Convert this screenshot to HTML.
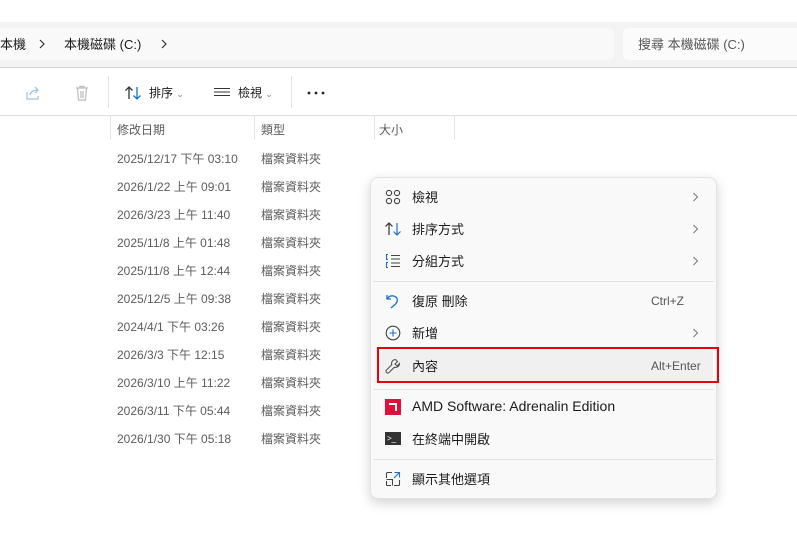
<!DOCTYPE html>
<html><head><meta charset="utf-8"><style>
*{margin:0;padding:0;box-sizing:border-box}
body{width:797px;height:534px;overflow:hidden;background:#fff;position:relative;font-family:"Liberation Sans","Noto Sans CJK TC",sans-serif;color:#1a1a1a}
.a{position:absolute}
.band{left:0;top:22px;width:797px;height:46px;background:#f3f3f3;border-bottom:1px solid #d5d5d5}
.addr{left:0;top:28px;width:614px;height:32px;background:#f9f9f9;border-radius:0 5px 5px 0}
.search{left:623px;top:28px;width:180px;height:32px;background:#fbfbfb;border-radius:5px;font-size:13px;color:#555;padding:6px 0 0 15px}
.t13{font-size:13px}
.hdr{font-size:12px;color:#5a5a5a}
.row{font-size:12px;color:#5c5c5c}
.sep{background:#e5e5e5;width:1px}
.menu{left:370px;top:177px;width:347px;height:322px;background:#f9f9f9;border-radius:8px;box-shadow:0 4px 12px rgba(0,0,0,.18);border:1px solid #e3e3e3}
.mi{font-size:13px;color:#1b1b1b}
.ms{left:373px;width:341px;height:1px;background:#e3e3e3}
.sc{font-size:12px;color:#555}
</style></head><body>
<div class="a band"></div>
<div class="a addr"></div>
<div class="a t13" style="left:0;top:34px">本機</div>
<svg class="a" style="left:38px;top:39px" width="8" height="10" viewBox="0 0 8 10" fill="none" stroke="#333" stroke-width="1.2"><path d="M2 1l4 4-4 4"/></svg>
<div class="a t13" style="left:64px;top:34px">本機磁碟 (C:)</div>
<svg class="a" style="left:160px;top:39px" width="8" height="10" viewBox="0 0 8 10" fill="none" stroke="#333" stroke-width="1.2"><path d="M2 1l4 4-4 4"/></svg>
<div class="a search">搜尋 本機磁碟 (C:)</div>

<svg class="a" style="left:24px;top:84px" width="18" height="18" viewBox="0 0 18 18" fill="none" stroke="#9ec3e6" stroke-width="1.2"><path d="M3 8v7h11v-3"/><path d="M6 11c1-4 4-5 8-5M11 3l3 3-3 3"/></svg>
<svg class="a" style="left:73px;top:84px" width="18" height="18" viewBox="0 0 18 18" fill="none" stroke="#bbb" stroke-width="1.2"><path d="M3 4h12M7 4V2.5h4V4M4.5 4l1 12h7l1-12M8 7v7M10 7v7"/></svg>
<div class="a sep" style="left:108px;top:76px;height:32px"></div>
<svg class="a" style="left:124px;top:85px" width="18" height="16" viewBox="0 0 18 16" fill="none" stroke-width="1.3"><path d="M5 14V2M1.5 5.5L5 2l3.5 3.5" stroke="#333"/><path d="M13 2v12M9.5 10.5L13 14l3.5-3.5" stroke="#1a73c9"/></svg>
<div class="a t13" style="left:149px;top:84px;font-size:12px">排序 <span style="font-size:9px;color:#888">⌄</span></div>
<svg class="a" style="left:213px;top:87px" width="18" height="12" viewBox="0 0 18 12" stroke="#333" stroke-width="1.1"><path d="M1 1.5h16M1 5h16M1 8.5h16"/></svg>
<div class="a" style="left:238px;top:84px;font-size:12px">檢視 <span style="font-size:9px;color:#888">⌄</span></div>
<div class="a sep" style="left:291px;top:76px;height:32px"></div>
<svg class="a" style="left:307px;top:91px" width="18" height="4" viewBox="0 0 18 4" fill="#222"><circle cx="2" cy="2" r="1.4"/><circle cx="9" cy="2" r="1.4"/><circle cx="16" cy="2" r="1.4"/></svg>
<div class="a" style="left:0;top:115px;width:797px;height:1px;background:#ddd"></div>
<div class="a sep" style="left:110px;top:116px;height:24px"></div>
<div class="a sep" style="left:254px;top:116px;height:24px"></div>
<div class="a sep" style="left:374px;top:116px;height:24px"></div>
<div class="a sep" style="left:454px;top:116px;height:24px"></div>
<div class="a hdr" style="left:117px;top:121px">修改日期</div>
<div class="a hdr" style="left:261px;top:121px">類型</div>
<div class="a hdr" style="left:379px;top:121px">大小</div>

<div class="a row" style="left:117px;top:145px;line-height:28px">2025/12/17 下午 03:10<br>2026/1/22 上午 09:01<br>2026/3/23 上午 11:40<br>2025/11/8 上午 01:48<br>2025/11/8 上午 12:44<br>2025/12/5 上午 09:38<br>2024/4/1 下午 03:26<br>2026/3/3 下午 12:15<br>2026/3/10 上午 11:22<br>2026/3/11 下午 05:44<br>2026/1/30 下午 05:18</div>
<div class="a row" style="left:261px;top:145px;line-height:28px">檔案資料夾<br>檔案資料夾<br>檔案資料夾<br>檔案資料夾<br>檔案資料夾<br>檔案資料夾<br>檔案資料夾<br>檔案資料夾<br>檔案資料夾<br>檔案資料夾<br>檔案資料夾</div>

<div class="a menu"></div>
<svg class="a" style="left:385px;top:189px" width="16" height="16" viewBox="0 0 16 16" fill="none" stroke="#444" stroke-width="1.1"><circle cx="4" cy="4" r="2.6"/><circle cx="12" cy="4" r="2.6"/><circle cx="4" cy="12" r="2.6"/><circle cx="12" cy="12" r="2.6"/></svg>
<svg class="a" style="left:384px;top:221px" width="18" height="16" viewBox="0 0 18 16" fill="none" stroke-width="1.2"><path d="M5 14V2M1.5 5.5L5 2l3.5 3.5" stroke="#333"/><path d="M13 2v12M9.5 10.5L13 14l3.5-3.5" stroke="#1a73c9"/></svg>
<svg class="a" style="left:385px;top:253px" width="16" height="16" viewBox="0 0 16 16" fill="none" stroke-width="1.1"><path d="M3 1.5H1.5v5H3M3 9.5H1.5v5H3" stroke="#1a73c9"/><path d="M6 2.5h9M6 6h9M6 10h9M6 13.5h9" stroke="#444"/></svg>
<svg class="a" style="left:385px;top:293px" width="16" height="16" viewBox="0 0 16 16" fill="none" stroke="#1a73c9" stroke-width="1.3"><path d="M2 2v4h4"/><path d="M2.5 5.5C4 3 7 2 10 3.5c3 1.5 3 5 .5 7.5L6 15"/></svg>
<svg class="a" style="left:385px;top:325px" width="16" height="16" viewBox="0 0 16 16" fill="none" stroke-width="1.1"><circle cx="8" cy="8" r="6.8" stroke="#444"/><path d="M8 4.5v7M4.5 8h7" stroke="#1a73c9"/></svg>
<div class="a" style="left:380px;top:351px;width:333px;height:30px;background:#f0f0f0;border-radius:4px"></div>
<div class="a" style="left:377px;top:347px;width:342px;height:36px;border:2px solid #e8000b"></div>
<svg class="a" style="left:385px;top:358px" width="16" height="16" viewBox="0 0 16 16" fill="none" stroke="#555" stroke-width="1.1"><path d="M10.5 1.5a4 4 0 0 0-3.8 5.2L1.5 12a1.4 1.4 0 0 0 2.5 2.5l5.3-5.2A4 4 0 0 0 14.5 5.5l-2.5 2.5-2-2 2.5-2.5z"/></svg>
<div class="a" style="left:385px;top:399px;width:16px;height:16px;background:#e1103a"></div>
<div class="a" style="left:389px;top:403px;width:8px;height:8px;border-top:2px solid #fff;border-right:2px solid #fff"></div>
<div class="a" style="left:385px;top:432px;width:16px;height:13px;background:#333"></div>
<div class="a" style="left:387px;top:435px;font-size:8px;color:#fff;line-height:8px">&gt;_</div>
<svg class="a" style="left:385px;top:471px" width="16" height="16" viewBox="0 0 16 16" fill="none" stroke-width="1.1"><path d="M7 1.5H2.5a1 1 0 0 0-1 1V7M1.5 10v3.5a1 1 0 0 0 1 1H6M9 14.5h4.5a1 1 0 0 0 1-1V9M1.5 8.5h6v6" stroke="#444"/><path d="M9.5 1.5h5v5M14.5 1.5L9 7" stroke="#1a73c9"/></svg>

<div class="a mi" style="left:412px;top:187px">檢視</div>
<div class="a mi" style="left:412px;top:219px">排序方式</div>
<div class="a mi" style="left:412px;top:251px">分組方式</div>
<div class="a ms" style="top:281px"></div>
<div class="a mi" style="left:412px;top:291px">復原 刪除</div>
<div class="a mi" style="left:412px;top:323px">新增</div>
<div class="a mi" style="left:412px;top:356px">內容</div>
<div class="a ms" style="top:389px"></div>
<div class="a mi" style="left:412px;top:398px;font-size:14px">AMD Software: Adrenalin Edition</div>
<div class="a mi" style="left:412px;top:429px">在終端中開啟</div>
<div class="a ms" style="top:459px"></div>
<div class="a mi" style="left:412px;top:469px">顯示其他選項</div>
<svg class="a" style="left:692px;top:192px" width="7" height="10" viewBox="0 0 7 10" fill="none" stroke="#777" stroke-width="1"><path d="M1.5 1l4 4-4 4"/></svg>
<svg class="a" style="left:692px;top:224px" width="7" height="10" viewBox="0 0 7 10" fill="none" stroke="#777" stroke-width="1"><path d="M1.5 1l4 4-4 4"/></svg>
<svg class="a" style="left:692px;top:256px" width="7" height="10" viewBox="0 0 7 10" fill="none" stroke="#777" stroke-width="1"><path d="M1.5 1l4 4-4 4"/></svg>
<svg class="a" style="left:692px;top:328px" width="7" height="10" viewBox="0 0 7 10" fill="none" stroke="#777" stroke-width="1"><path d="M1.5 1l4 4-4 4"/></svg>
<div class="a sc" style="left:651px;top:294px">Ctrl+Z</div>
<div class="a sc" style="left:651px;top:359px">Alt+Enter</div>
</body></html>
